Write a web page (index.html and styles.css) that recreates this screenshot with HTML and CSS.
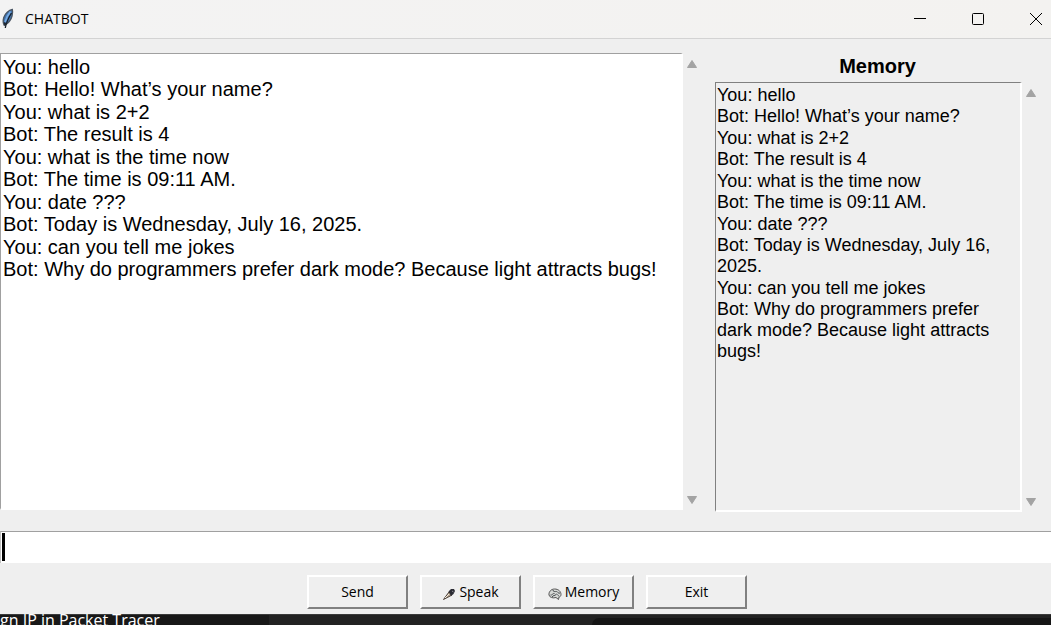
FILE: index.html
```html
<!DOCTYPE html>
<html lang="en">
<head>
<meta charset="utf-8">
<meta name="viewport" content="width=device-width, initial-scale=1">
<title>CHATBOT</title>
<link rel="stylesheet" href="styles.css">
</head>
<body>
<div class="window">
  <header class="titlebar">
    <svg class="feather" viewBox="0 0 16 22" aria-hidden="true">
      <path d="M12.300 1.500C9 2 5 5.500 3.800 9.500c-.8 3-.8 5.700.4 7.700C8 15.500 11 12 12 8c.6-2.500.8-4.700.3-6.500z" fill="#4078b8" stroke="#4a5563" stroke-width="1.400"/>
      <path d="M10.500 3.500C8 6.500 6.300 10 5.200 14" stroke="#78abe2" stroke-width="1.800" fill="none"/>
      <path d="M11.500 5C9 9 6.500 13 5.300 20" stroke="#17202a" stroke-width="1.300" fill="none"/>
      <path d="M3.800 14c0 2 .6 3.500 1.600 5.500 0-2 .8-3 1.600-4z" fill="#222a33"/>
    </svg>
    <h1 class="title">CHATBOT</h1>
    <button class="caption" aria-label="Minimize"><svg viewBox="0 0 14 14"><path d="M1 6.500h12"/></svg></button>
    <button class="caption" aria-label="Maximize"><svg viewBox="0 0 14 14"><rect x="1.500" y="1.500" width="11" height="11" rx="1"/></svg></button>
    <button class="caption" aria-label="Close"><svg viewBox="0 0 14 14"><path d="M1 1l12 12M13 1L1 13"/></svg></button>
  </header>

  <main class="content">
    <section class="chat" aria-label="Conversation">
      <div class="log log-chat">
        <div class="exchange"><p>You: hello</p><p>Bot: Hello! What’s your name?</p></div>
        <div class="exchange"><p>You: what is 2+2</p><p>Bot: The result is 4</p></div>
        <div class="exchange"><p>You: what is the time now</p><p>Bot: The time is 09:11 AM.</p></div>
        <div class="exchange"><p>You: date ???</p><p>Bot: Today is Wednesday, July 16, 2025.</p></div>
        <div class="exchange"><p>You: can you tell me jokes</p><p>Bot: Why do programmers prefer dark mode? Because light attracts bugs!</p></div>
      </div>
      <div class="scrollbar">
        <button class="arrow" aria-label="Scroll chat up"><svg viewBox="0 0 12 10"><path d="M6 1.500L10.500 8.500h-9z"/></svg></button>
        <button class="arrow" aria-label="Scroll chat down"><svg viewBox="0 0 12 10"><path d="M6 8.500L10.500 1.500h-9z"/></svg></button>
      </div>
    </section>

    <section class="memory" aria-labelledby="memory-title">
      <h2 class="memory-title" id="memory-title">Memory</h2>
      <div class="log log-memory">
        <div class="exchange"><p>You: hello</p><p>Bot: Hello! What’s your name?</p></div>
        <div class="exchange"><p>You: what is 2+2</p><p>Bot: The result is 4</p></div>
        <div class="exchange"><p>You: what is the time now</p><p>Bot: The time is 09:11 AM.</p></div>
        <div class="exchange"><p>You: date ???</p><p>Bot: Today is Wednesday, July 16, 2025.</p></div>
        <div class="exchange"><p>You: can you tell me jokes</p><p>Bot: Why do programmers prefer dark mode? Because light attracts bugs!</p></div>
      </div>
      <div class="scrollbar">
        <button class="arrow" aria-label="Scroll memory up"><svg viewBox="0 0 12 10"><path d="M6 1.500L10.500 8.500h-9z"/></svg></button>
        <button class="arrow" aria-label="Scroll memory down"><svg viewBox="0 0 12 10"><path d="M6 8.500L10.500 1.500h-9z"/></svg></button>
      </div>
    </section>
  </main>

  <div class="entry">
    <input class="entry-input" type="text" aria-label="Message">
    <span class="caret"></span>
  </div>

  <div class="actions">
    <button class="action">Send</button>
    <button class="action">
      <svg class="action-icon" viewBox="0 0 14 14" aria-hidden="true">
        <path d="M1.500 12.500L7 5l3 3z" fill="#b9a68f" stroke="#4a4038" stroke-width="1"/>
        <path d="M3 11l4-4" stroke="#f2e9de" stroke-width="1"/>
        <path d="M6.500 4.500L9 2h3l1 2-1.500 3-2.500 2z" fill="#2b2b33"/>
        <path d="M10 4l1.500 1" stroke="#8a8a92" stroke-width="1"/>
      </svg>
      Speak
    </button>
    <button class="action">
      <svg class="action-icon" viewBox="0 0 14 14" aria-hidden="true">
        <path d="M1 8C.5 5 3 2 6.500 2c4 0 6.500 2.500 6.500 5.500 0 1.500-1 2.500-2 2.500l-.5 2.500L8 10.500c-3 1-6.500 0-7-2.500z" fill="#d6d8d5" stroke="#555" stroke-width="1"/>
        <path d="M2.500 8c2 .5 2-2 4-1.500M5 3c0 2 2 1.500 3.500 1.500S10 7 12 6M4 10c1-2 3-1 4-2.500s2 1.500 3 1.500" fill="none" stroke="#494d50" stroke-width="1"/>
      </svg>
      Memory
    </button>
    <button class="action">Exit</button>
  </div>
</div>

<footer class="backdrop">
  <div class="backdrop-text">gn IP in Packet Tracer</div>
  <div class="backdrop-gap"></div>
  <div class="backdrop-panel"></div>
</footer>
</body>
</html>
```
FILE: styles.css
```css
* {
  box-sizing: border-box;
}

body {
  margin: 0;
  height: 100vh;
  display: flex;
  flex-direction: column;
  overflow: hidden;
  background: #181818;
  color: #000;
  font-family: "Liberation Sans", Arial, sans-serif;
}

h1, h2, p {
  margin: 0;
}

button {
  font: inherit;
  color: inherit;
  border: 0;
  padding: 0;
  background: none;
}

.window {
  flex: 1;
  min-height: 0;
  display: flex;
  flex-direction: column;
  background: #efefef;
}

.titlebar {
  flex: none;
  display: flex;
  align-items: center;
  height: 39px;
  padding-bottom: 1px;
  border-bottom: 1px solid #d3d3d3;
  background: linear-gradient(90deg, #f3f3f3, #f3f2f0);
}

.feather {
  width: 16px;
  height: 22px;
  margin-right: 9px;
}

.title {
  flex: 1;
  font-family: "Open Sans", "Noto Sans", sans-serif;
  font-size: 14px;
  line-height: 18px;
  font-weight: 400;
}

.caption {
  display: grid;
  place-items: center;
  width: 30px;
  height: 38px;
  margin-left: 28px;
}

.caption svg {
  width: 14px;
  height: 14px;
  fill: none;
  stroke: #000;
  stroke-width: 1;
}

.content {
  flex: 1;
  min-height: 0;
  display: grid;
  grid-template-columns: minmax(0, 701px) minmax(0, 325px);
  justify-content: space-between;
  padding: 14px 11px 19px 0;
}

.chat {
  min-height: 0;
  display: grid;
  grid-template-columns: minmax(0, 1fr) 18px;
  padding-bottom: 2px;
}

.memory {
  min-height: 0;
  display: grid;
  grid-template-columns: minmax(0, 1fr) 18px;
  grid-template-rows: 29px minmax(0, 1fr);
}

.memory-title {
  grid-column: 1 / -1;
  font-size: 20px;
  line-height: 26px;
  text-align: center;
}

.log {
  display: flex;
  flex-direction: column;
  gap: 1px;
  overflow: hidden;
  border-style: solid;
  border-width: 1px 2px 2px 1px;
}

.log-chat {
  padding: 2px 0 0 2px;
  border-color: #a0a0a0 #fff #fff #a0a0a0;
  background: #fff;
  font-size: 20px;
  line-height: 22px;
}

.log-memory {
  padding: 2px 8px 0 1px;
  border-color: #808080 #fff #fff #808080;
  font-size: 18px;
  line-height: 21px;
}

.scrollbar {
  display: flex;
  flex-direction: column;
  justify-content: space-between;
  align-items: center;
  padding: 4px 0 3px;
}

.arrow {
  display: grid;
  place-items: center;
  width: 18px;
  height: 14px;
}

.arrow svg {
  width: 12px;
  height: 10px;
  fill: #a3a3a3;
  stroke: #a3a3a3;
  stroke-width: 1;
  stroke-linejoin: round;
}

.entry {
  flex: none;
  position: relative;
}

.entry-input {
  display: block;
  width: 100%;
  height: 32px;
  padding: 0 4px;
  border: 0;
  border-top: 1px solid #a0a0a0;
  border-left: 1px solid #c0c0c0;
  border-radius: 0;
  outline: 0;
  background: #fff;
  font: 20px "Liberation Sans", Arial, sans-serif;
}

.caret {
  position: absolute;
  left: 2px;
  top: 2px;
  bottom: 2px;
  width: 3px;
  background: #000;
}

.actions {
  flex: none;
  display: flex;
  justify-content: center;
  gap: 12px;
  padding: 12px 0 5px 3px;
}

.action {
  display: flex;
  align-items: center;
  justify-content: center;
  gap: 3px;
  width: 101px;
  height: 34px;
  padding-bottom: 2px;
  border: 2px solid;
  border-color: #fff #808080 #808080 #fff;
  background: #efefef;
  font-family: "Open Sans", "Noto Sans", sans-serif;
  font-size: 14px;
}

.action-icon {
  width: 14px;
  height: 14px;
  margin-top: 6px;
}

.backdrop {
  flex: none;
  display: flex;
  height: 11px;
  border-top: 1px solid #3a3a3a;
  background: #222;
  color: #fff;
}

.backdrop-text {
  flex: 269;
  background: #181818;
  font-family: "Open Sans", "Noto Sans", sans-serif;
  font-size: 16px;
  line-height: 10px;
  white-space: nowrap;
}

.backdrop-gap {
  flex: 323;
}

.backdrop-panel {
  flex: 459;
  margin-top: 3px;
  border-top-left-radius: 12px;
  background: #151515;
}
```
